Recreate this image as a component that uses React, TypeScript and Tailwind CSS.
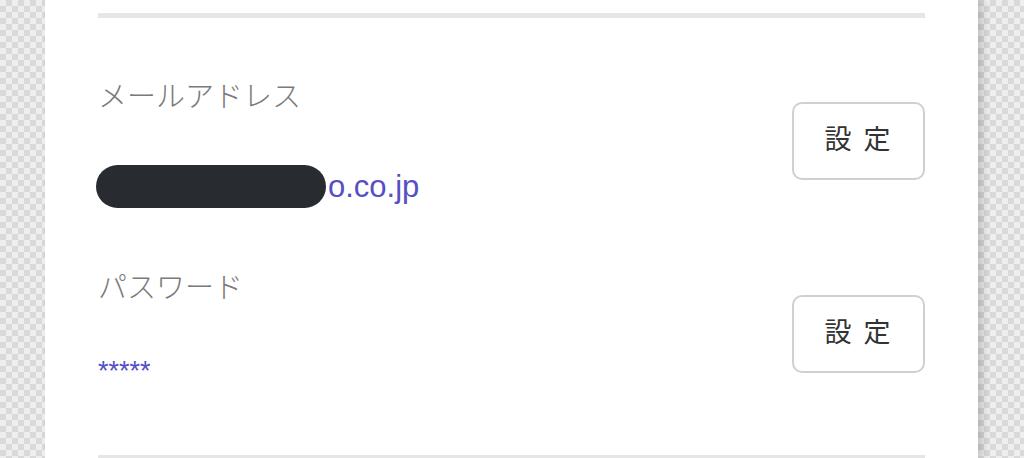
import React from 'react';

const font = '"Liberation Sans", "Noto Sans CJK JP", sans-serif';

interface RowProps {
  label: string;
  children: React.ReactNode;
  colClass: string;
}

function SettingRow({ label, children, colClass }: RowProps) {
  return (
    <div className="flex h-[193px] items-center justify-between">
      <div className={`flex flex-col ${colClass}`}>
        <div className="text-[29px] leading-[40px] font-light text-[#7b7b7b]">{label}</div>
        {children}
      </div>
      <button className="flex h-[78px] w-[133px] items-center justify-center rounded-[10px] border-2 border-[#d0d0d0] bg-white pl-[10px] text-[27px] tracking-[12px] text-[#333333]">
        設定
      </button>
    </div>
  );
}

export default function App() {
  return (
    <div
      className="flex h-[458px] w-full overflow-hidden bg-[repeating-conic-gradient(#d9d9d9_0%_25%,#eeeeee_0%_50%)] bg-size-[12px_12px]"
      style={{ fontFamily: font }}
    >
      <div className="w-[45px] shrink-0" />
      <div className="flex w-[933px] shrink-0 flex-col bg-white px-[53px] shadow-[5px_0_8px_rgba(0,0,0,0.18)]">
        <div className="mt-[13px] h-[5px] bg-[#e6e6e6]" />
        <div className="pt-[26px]">
          {/* メールアドレス */}
          <SettingRow label="メールアドレス" colClass="gap-[50px] pt-[2px]">
            <div className="flex h-[40px] items-center">
              <span className="-ml-[2px] inline-block h-[43px] w-[230px] shrink-0 rounded-full bg-[#282c31]" />
              <span className="ml-[2px] text-[31px] leading-[40px] text-[#564fc5]">o.co.jp</span>
            </div>
          </SettingRow>
          {/* パスワード */}
          <SettingRow label="パスワード" colClass="gap-[48px] pb-[14px]">
            <div className="h-[30px] text-[27px] leading-[30px] text-[#564fc5]">*****</div>
          </SettingRow>
        </div>
        <div className="mt-auto h-[3px] bg-[#e6e6e6]" />
      </div>
    </div>
  );
}
